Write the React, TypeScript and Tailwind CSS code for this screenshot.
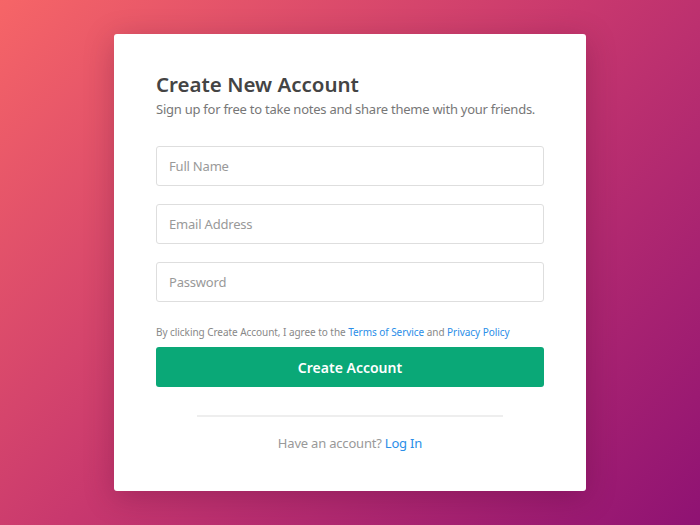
export default function App() {
  return (
    <div
      className="w-[700px] h-[525px] flex items-start justify-center pt-[34px] bg-[linear-gradient(135deg,#f66567_0%,#c8386e_48%,#8f1273_100%)]"
      style={{ fontFamily: '"Noto Sans", "Open Sans", sans-serif' }}
    >
      <div className="w-[472px] h-[457px] bg-white rounded-[3px] shadow-[0_6px_30px_rgba(60,0,40,0.25)] px-[42px] pt-[36px]">
        <h1 className="text-[20.5px] leading-[28px] font-semibold text-[#444]">Create New Account</h1>
        <p className="text-[13px] leading-[20px] tracking-[-0.25px] text-[#777] mt-[1px] whitespace-nowrap">
          Sign up for free to take notes and share theme with your friends.
        </p>

        <div className="flex flex-col gap-[18px] mt-[27px]">
          {["Full Name", "Email Address", "Password"].map((p) => (
            <input
              key={p}
              type={p === "Password" ? "password" : "text"}
              placeholder={p}
              className="h-[40px] w-full border border-[#dedede] rounded-[3px] px-[12px] text-[13px] tracking-[-0.2px] text-[#555] placeholder:text-[#999] outline-none"
            />
          ))}
        </div>

        <p className="text-[10px] leading-[16px] tracking-[-0.05px] text-[#888] mt-[22px] whitespace-nowrap">
          By clicking Create Account, I agree to the{" "}
          <a className="text-[#2a8ee8]">Terms of Service</a> and{" "}
          <a className="text-[#2a8ee8]">Privacy Policy</a>
        </p>

        <button className="mt-[7px] h-[40px] w-full bg-[#0aa877] rounded-[3px] text-white text-[14px] font-semibold">
          Create Account
        </button>

        <div className="mx-[41px] mt-[28px] h-[2px] bg-[#eeeeee]" />

        <p className="text-center text-[13px] leading-[20px] tracking-[-0.2px] text-[#999] mt-[16px]">
          Have an account? <a className="text-[#2a8ee8]">Log In</a>
        </p>
      </div>
    </div>
  );
}
